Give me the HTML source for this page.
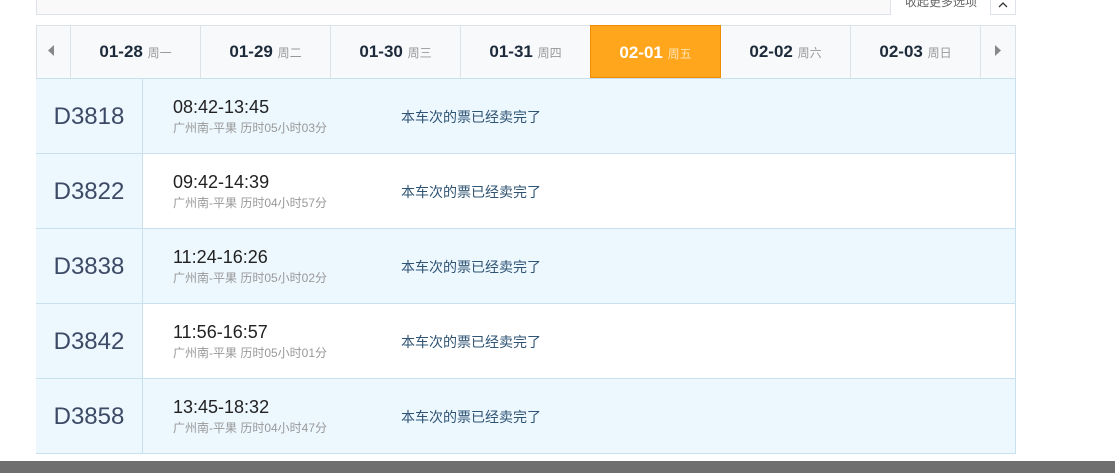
<!DOCTYPE html>
<html><head><meta charset="utf-8"><style>
*{margin:0;padding:0;box-sizing:border-box}
body{width:1115px;height:473px;background:#fff;position:relative;overflow:hidden;font-family:"Liberation Sans","Noto Sans CJK SC",sans-serif}
.a{position:absolute}
.top{left:36px;top:-1px;width:980px;height:16px;background:#f9f9f9;border:1px solid #dde3e8}
.btn{left:890px;top:-1px;width:101px;height:16px;background:#fff;border-left:1px solid #dde3e8;font-size:12px;color:#666;text-align:center;line-height:6px}
.chev{left:990px;top:-1px;width:26px;height:16px;background:#fff;border:1px solid #dde3e8}
.tabs{left:36px;top:25px;width:980px;height:53px;background:#f7f9fb;border:1px solid #dbe2e8;border-bottom:none}
.tab{top:25px;height:53px;width:130px;border-left:1px solid #dbe2e8;text-align:center;line-height:53px;font-size:17px;color:#1d2a3a;font-weight:bold}
.tab small{font-size:12px;color:#999;font-weight:normal}
.tab.on{background:#ffa61d;border:1px solid #f08c00;color:#fff}
.tab.on small{color:#ffe3b3}
.row{left:36px;width:980px;height:76px;border:1px solid #c9e0ef}
.num{left:36px;width:107px;height:76px;border-right:1px solid #c9e0ef;text-align:center;line-height:76px;font-size:24px;color:#3c4a66}
.t{left:173px;font-size:18px;color:#222}
.r{left:173px;font-size:12px;color:#999}
.s{left:401px;font-size:14px;color:#2f5474}
</style></head><body>
<div class="a top"></div>
<div class="a btn">收起更多选项</div>
<div class="a chev"><svg width="26" height="14" style="position:absolute;left:0;top:0"><path d="M8 7l4-4 4 4" stroke="#333" stroke-width="1.3" fill="none"/></svg></div>

<div class="a tabs"></div>
<svg class="a" style="left:47px;top:44px" width="8" height="14"><path d="M7 1v11L1 6.5z" fill="#888"/></svg>
<div class="a tab" style="left:70px">01-28 <small>周一</small></div>
<div class="a tab" style="left:200px">01-29 <small>周二</small></div>
<div class="a tab" style="left:330px">01-30 <small>周三</small></div>
<div class="a tab" style="left:460px">01-31 <small>周四</small></div>
<div class="a tab" style="left:850px">02-03 <small>周日</small></div>
<div class="a tab" style="left:720px">02-02 <small>周六</small></div>
<div class="a tab" style="left:980px;width:36px;border-right:1px solid #dbe2e8"></div>
<svg class="a" style="left:994px;top:44px" width="8" height="14"><path d="M1 1v11L7 6.5z" fill="#888"/></svg>
<div class="a tab on" style="left:590px;width:131px">02-01 <small>周五</small></div>

<div class="a row" style="top:78px;background:#edf7fe"></div>
<div class="a row" style="top:153px;background:#fff"></div>
<div class="a row" style="top:228px;background:#edf7fe"></div>
<div class="a row" style="top:303px;background:#fff"></div>
<div class="a row" style="top:378px;background:#edf7fe"></div>

<div class="a num" style="top:78px;background:#edf7fe;border-top:1px solid #c9e0ef">D3818</div>
<div class="a num" style="top:153px;background:#edf7fe;border-top:1px solid #c9e0ef">D3822</div>
<div class="a num" style="top:228px;background:#edf7fe;border-top:1px solid #c9e0ef">D3838</div>
<div class="a num" style="top:303px;background:#edf7fe;border-top:1px solid #c9e0ef">D3842</div>
<div class="a num" style="top:378px;background:#edf7fe;border-top:1px solid #c9e0ef;border-bottom:1px solid #c9e0ef;height:76px">D3858</div>

<div class="a t" style="top:97px">08:42-13:45</div><div class="a r" style="top:119px">广州南-平果 历时05小时03分</div><div class="a s" style="top:107px">本车次的票已经卖完了</div>
<div class="a t" style="top:172px">09:42-14:39</div><div class="a r" style="top:194px">广州南-平果 历时04小时57分</div><div class="a s" style="top:182px">本车次的票已经卖完了</div>
<div class="a t" style="top:247px">11:24-16:26</div><div class="a r" style="top:269px">广州南-平果 历时05小时02分</div><div class="a s" style="top:257px">本车次的票已经卖完了</div>
<div class="a t" style="top:322px">11:56-16:57</div><div class="a r" style="top:344px">广州南-平果 历时05小时01分</div><div class="a s" style="top:332px">本车次的票已经卖完了</div>
<div class="a t" style="top:397px">13:45-18:32</div><div class="a r" style="top:419px">广州南-平果 历时04小时47分</div><div class="a s" style="top:407px">本车次的票已经卖完了</div>

<div class="a" style="left:0;top:461px;width:1115px;height:12px;background:#6f6f6f"></div>
</body></html>
